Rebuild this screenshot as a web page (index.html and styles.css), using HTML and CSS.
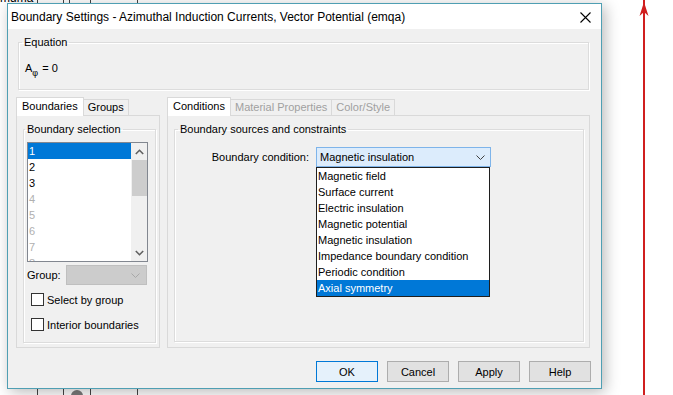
FILE: index.html
```html
<!DOCTYPE html>
<html lang="en">
<head>
  <meta charset="UTF-8">
  <title>Boundary Settings</title>
  <link rel="stylesheet" href="styles.css">
</head>
<body>
  <div class="backdrop">
    <span class="backdrop-text">mdma</span>
    <span class="vline l1"></span>
    <span class="vline l2"></span>
    <span class="vline l3 top-only"></span>
    <span class="vline l4"></span>
    <span class="vline l5"></span>
    <span class="blob"></span>
    <svg class="axis" width="12" height="395" viewBox="0 0 12 395">
      <line x1="6" y1="0" x2="6" y2="395" stroke="#d01f1f" stroke-width="2"/>
      <path d="M6 2 L1.5 16 L6 12 L10.5 16 Z" fill="#d01f1f"/>
    </svg>
  </div>

  <div class="dialog">
    <div class="titlebar">
      <span class="title">Boundary Settings - Azimuthal Induction Currents, Vector Potential (emqa)</span>
      <svg class="close" width="11" height="11" viewBox="0 0 11 11">
        <path d="M0.5 0.5 L10.5 10.5 M10.5 0.5 L0.5 10.5" stroke="#000" stroke-width="1.1"/>
      </svg>
    </div>

    <div class="dialog-body">
      <fieldset class="group equation">
        <legend>Equation</legend>
        <div class="eq">A<sub>φ</sub> = 0</div>
      </fieldset>

      <div class="tab-area">
        <div class="tabs tabs-left">
          <div class="tab-row">
            <span class="tab active">Boundaries</span>
            <span class="tab">Groups</span>
          </div>
          <div class="tab-panel">
            <fieldset class="group selection">
              <legend>Boundary selection</legend>
              <div class="listbox">
                <ul class="items">
                  <li class="selected">1</li>
                  <li>2</li>
                  <li>3</li>
                  <li class="off">4</li>
                  <li class="off">5</li>
                  <li class="off">6</li>
                  <li class="off">7</li>
                  <li class="off">8</li>
                </ul>
                <div class="scrollbar">
                  <span class="sb-btn">
                    <svg width="9" height="6" viewBox="0 0 9 6"><path d="M0.8 5 L4.5 1.3 L8.2 5" fill="none" stroke="#606060" stroke-width="1.6"/></svg>
                  </span>
                  <span class="sb-thumb"></span>
                  <span class="sb-space"></span>
                  <span class="sb-btn">
                    <svg width="9" height="6" viewBox="0 0 9 6"><path d="M0.8 1 L4.5 4.7 L8.2 1" fill="none" stroke="#606060" stroke-width="1.6"/></svg>
                  </span>
                </div>
              </div>
              <div class="group-row">
                <span class="group-label">Group:</span>
                <span class="combo disabled">
                  <svg width="9" height="5" viewBox="0 0 9 5"><path d="M0.5 0.5 L4.5 4.5 L8.5 0.5" fill="none" stroke="#a8a8a8" stroke-width="1"/></svg>
                </span>
              </div>
              <div class="check check-first"><span class="box"></span>Select by group</div>
              <div class="check"><span class="box"></span>Interior boundaries</div>
            </fieldset>
          </div>
        </div>

        <div class="tabs tabs-right">
          <div class="tab-row">
            <span class="tab active">Conditions</span>
            <span class="tab off">Material Properties</span>
            <span class="tab off">Color/Style</span>
          </div>
          <div class="tab-panel">
            <fieldset class="group sources">
              <legend>Boundary sources and constraints</legend>
              <div class="cond-row">
                <span class="cond-label">Boundary condition:</span>
                <div class="combo-wrap">
                  <span class="combo open">
                    <span>Magnetic insulation</span>
                    <svg width="9" height="5" viewBox="0 0 9 5"><path d="M0.5 0.5 L4.5 4.5 L8.5 0.5" fill="none" stroke="#404040" stroke-width="1"/></svg>
                  </span>
                  <ul class="dropdown">
                    <li>Magnetic field</li>
                    <li>Surface current</li>
                    <li>Electric insulation</li>
                    <li>Magnetic potential</li>
                    <li>Magnetic insulation</li>
                    <li>Impedance boundary condition</li>
                    <li>Periodic condition</li>
                    <li class="selected">Axial symmetry</li>
                  </ul>
                </div>
              </div>
            </fieldset>
          </div>
        </div>
      </div>

      <div class="buttons">
        <button class="default">OK</button>
        <button>Cancel</button>
        <button>Apply</button>
        <button>Help</button>
      </div>
    </div>
  </div>
</body>
</html>
```

FILE: styles.css
```css
* {
  box-sizing: border-box;
}

body {
  margin: 0;
  padding: 3px 0 0 7px;
  width: 673px;
  height: 395px;
  overflow: hidden;
  position: relative;
  background: #fff;
  font-family: "Liberation Sans", Arial, sans-serif;
  font-size: 11px;
  color: #000;
}

/* things behind the dialog */
.backdrop {
  position: absolute;
  left: 0;
  top: 0;
  width: 100%;
  height: 100%;
}

.backdrop-text {
  position: absolute;
  left: 0;
  top: -8px;
  font-size: 12px;
  line-height: 12px;
}

.vline {
  position: absolute;
  top: 0;
  width: 1px;
  height: 100%;
  background: #444;
}

.l1 { left: 37px; }
.l2 { left: 63px; }
.l3 { left: 69px; }
.l4 { left: 90px; }
.l5 { left: 137px; }

.top-only {
  height: 6px;
}

.blob {
  position: absolute;
  left: 71px;
  top: 390px;
  width: 12px;
  height: 12px;
  border-radius: 50%;
  background: #7a7a7a;
}

.axis {
  position: absolute;
  left: 638px;
  top: 0;
}

/* dialog window */
.dialog {
  position: relative;
  width: 595px;
  height: 386px;
  border: 1px solid #4f9fb3;
  display: flex;
  flex-direction: column;
  box-shadow: 3px 3px 14px rgba(0, 0, 0, 0.28);
}

.titlebar {
  height: 25px;
  flex: none;
  background: #fff;
  display: flex;
  align-items: center;
  justify-content: space-between;
  padding: 0 10px 0 3px;
}

.title {
  font-size: 12px;
}

.close {
  display: block;
  margin-top: 1px;
}

.dialog-body {
  flex: 1;
  background: #f0f0f0;
  padding: 6px 10px 0 8px;
  display: flex;
  flex-direction: column;
}

.group {
  margin: 0;
  min-width: 0;
  border: 1px solid #dcdcdc;
  box-shadow: inset 1px 1px 0 #fff, 1px 1px 0 #fff;
}

.group legend {
  padding: 0 2px;
  margin-left: -2px;
  line-height: 14px;
}

.equation {
  height: 55px;
  margin: 0 2px;
  padding: 0 5px;
}

.eq {
  margin-top: 11px;
  padding-left: 1px;
  line-height: 16px;
}

.eq sub {
  font-size: 9px;
  vertical-align: -4px;
  line-height: 0;
  margin-right: 1px;
}

/* tabs */
.tab-area {
  display: flex;
  gap: 7px;
  margin-top: 7px;
}

.tabs-left {
  width: 144px;
}

.tabs-right {
  width: 423px;
}

.tab-row {
  height: 18px;
  display: flex;
  align-items: flex-end;
  padding-left: 1px;
}

.tab {
  height: 16px;
  line-height: 15px;
  padding: 0 4px;
  background: #f0f0f0;
  border: 1px solid #d9d9d9;
  border-bottom: none;
  margin-left: -1px;
}

.tab.active {
  height: 19px;
  line-height: 17px;
  margin-bottom: -1px;
  background: #fff;
  position: relative;
  z-index: 1;
  padding: 0 5px;
}

.tab.off {
  color: #a0a0a0;
}

.tab-panel {
  height: 233px;
  border: 1px solid #d9d9d9;
  background: #f0f0f0;
  padding-top: 6px;
}

/* boundary selection */
.selection {
  height: 221px;
  margin: 0 3px 0 6px;
  padding: 0 3px;
}

.listbox {
  margin-top: 6px;
  width: 121px;
  height: 120px;
  border: 1px solid #828790;
  background: #fff;
  display: flex;
  overflow: hidden;
}

.items {
  flex: 1;
  margin: 0;
  padding: 0;
  list-style: none;
}

.items li {
  height: 16px;
  line-height: 16px;
  padding-left: 1px;
}

.items li.selected {
  background: #0078d7;
  color: #fff;
}

.items li.off {
  color: #b0b0b0;
}

.scrollbar {
  width: 16px;
  background: #f0f0f0;
  display: flex;
  flex-direction: column;
}

.sb-btn {
  height: 17px;
  display: flex;
  align-items: center;
  justify-content: center;
}

.sb-thumb {
  height: 36px;
  margin-left: 1px;
  background: #cdcdcd;
}

.sb-space {
  flex: 1;
}

.group-row {
  display: flex;
  align-items: center;
  margin-top: 3px;
  height: 20px;
}

.group-label {
  width: 39px;
}

.combo {
  height: 20px;
  display: flex;
  align-items: center;
  justify-content: space-between;
  border: 1px solid #bfbfbf;
}

.combo.disabled {
  width: 81px;
  background: #cccccc;
  justify-content: flex-end;
  padding-right: 6px;
}

.check {
  display: flex;
  align-items: center;
  height: 25px;
  padding-left: 4px;
  gap: 3px;
}

.check-first {
  margin-top: 2px;
}

.box {
  width: 13px;
  height: 13px;
  border: 1px solid #333;
  background: #fff;
}

/* boundary conditions */
.sources {
  height: 220px;
  margin: 0 5px 0 6px;
  padding: 0 5px;
}

.cond-row {
  display: flex;
  align-items: center;
  margin-top: 11px;
}

.cond-label {
  width: 129px;
  text-align: right;
  margin-right: 7px;
}

.combo-wrap {
  position: relative;
}

.combo.open {
  width: 175px;
  background: #dcecfc;
  border-color: #7eb4ea;
  padding: 0 5px 0 3px;
}

.dropdown {
  position: absolute;
  left: 0;
  top: 100%;
  width: 174px;
  margin: 0;
  padding: 0;
  list-style: none;
  background: #fff;
  border: 1px solid #1e1e1e;
  z-index: 2;
}

.dropdown li {
  height: 16px;
  line-height: 16px;
  padding-left: 1px;
}

.dropdown li.selected {
  background: #0078d7;
  color: #fff;
}

/* buttons */
.buttons {
  display: flex;
  justify-content: flex-end;
  gap: 9px;
  margin-top: 13px;
}

button {
  width: 62px;
  height: 21px;
  padding: 0;
  font: inherit;
  color: #000;
  background: #e1e1e1;
  border: 1px solid #adadad;
}

button.default {
  background: #e5f1fb;
  border-color: #0078d7;
}
```
